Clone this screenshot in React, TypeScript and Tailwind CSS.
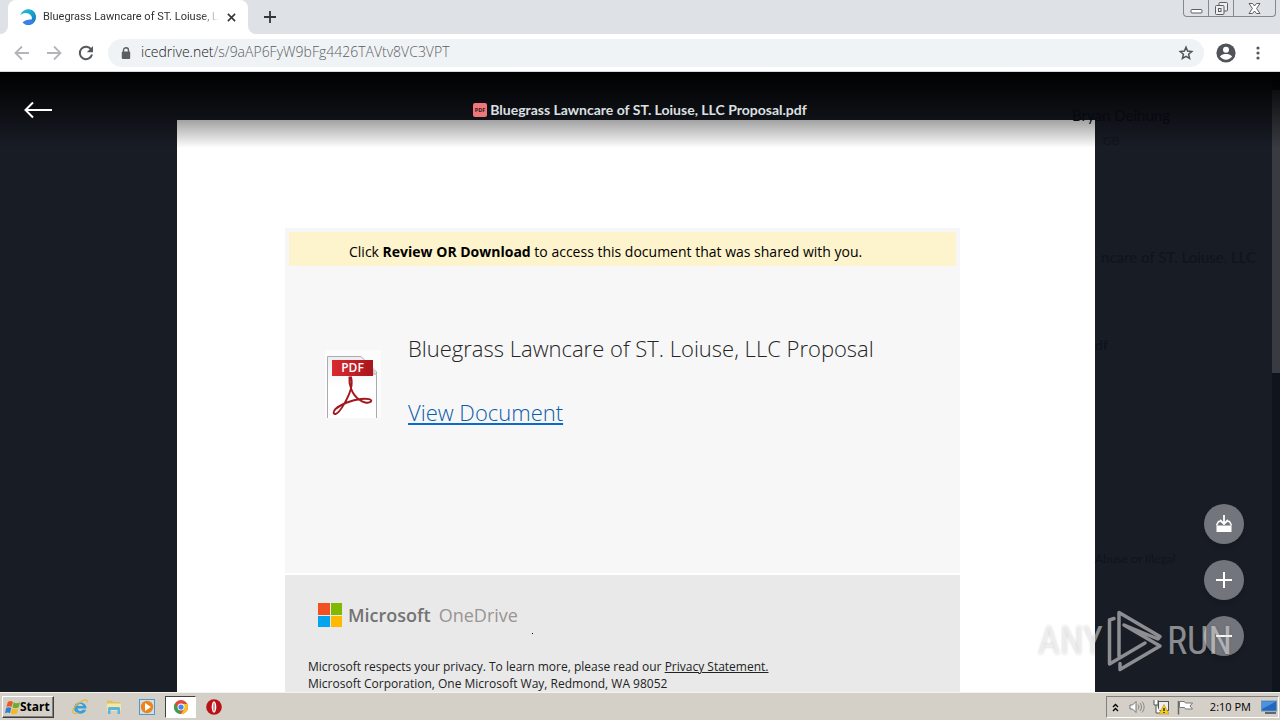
import React from "react";

const uiFont = "font-['Open_Sans','Noto_Sans',sans-serif]";

function TabStrip() {
  return (
    <div className="flex h-[34px] shrink-0 items-start bg-[#dee1e6]">
      <div className="flex h-full w-2 items-end bg-white">
        <div className="h-full w-full rounded-br-lg bg-[#dee1e6]" />
      </div>
      <div className="flex h-full w-60 items-center rounded-t-lg bg-white pr-2 pl-3">
        <svg viewBox="0 0 16 16" className="mr-[7px] size-4 shrink-0" aria-hidden="true">
          <defs>
            <linearGradient id="swirl" x1="0" y1="0" x2="1" y2="1">
              <stop offset="0" stopColor="#35b8e6" />
              <stop offset=".45" stopColor="#16a9c9" />
              <stop offset="1" stopColor="#1668c8" />
            </linearGradient>
          </defs>
          <path d="M0 6.500C1.500 2.500 4.500.2 8.400.2 12.800.2 16 3.500 16 7.900c0 4.300-3 7.600-7 8-2 .1-3.800-.5-5-1.500 3 .4 6.700-.6 7.700-3.600C12.900 7 9.500 3.900 5.700 3.900 3.300 3.900 1.300 4.900 0 6.500Z" fill="url(#swirl)" />
          <path d="M2.500 13.500c2.200-2 4-2.700 9.200-3.300l2 2.800c-3 3.600-8 3.700-11.200.5Z" fill="#3a80e6" />
        </svg>
        <span className="w-[176px] font-['Roboto',sans-serif] text-[11px] whitespace-nowrap text-[#303236] [mask-image:linear-gradient(to_right,black_90%,transparent)]">
          Bluegrass Lawncare of ST. Loiuse, LL
        </span>
        <button aria-label="Close tab" className="ml-1 flex size-4 shrink-0 items-center justify-center">
          <svg viewBox="0 0 10 10" className="size-[9px]"><path d="M1 1l8 8M9 1l-8 8" stroke="#33363a" strokeWidth="1.800" /></svg>
        </button>
      </div>
      <div className="h-full w-2 bg-white">
        <div className="h-full w-full rounded-bl-lg bg-[#dee1e6]" />
      </div>
      <button aria-label="New tab" className="flex h-full w-7 items-center justify-center">
        <svg viewBox="0 0 12 12" className="size-3"><path d="M6 0v12M0 6h12" stroke="#33363a" strokeWidth="1.800" /></svg>
      </button>
      <div className="mr-1 ml-auto flex h-[17px] rounded-b border border-t-0 border-[#85888f]">
        <button aria-label="Minimize" className="flex w-[25px] items-center justify-center border-r border-[#85888f]">
          <svg viewBox="0 0 13 13" className="size-[13px]"><rect x="1" y="7.500" width="11" height="3.500" rx="1" fill="#fff" stroke="#5c5f66" /></svg>
        </button>
        <button aria-label="Restore" className="flex w-[25px] items-center justify-center border-r border-[#85888f]">
          <svg viewBox="0 0 13 13" className="size-[13px]" fill="#eee" stroke="#5c5f66"><rect x="4" y=".5" width="8.500" height="8.500" rx="1" /><rect x=".5" y="3.500" width="8.500" height="9" rx="1" /><rect x="3.500" y="6.500" width="2.500" height="3" /></svg>
        </button>
        <button aria-label="Close window" className="flex w-[41px] items-center justify-center">
          <svg viewBox="0 0 13 11" className="h-[11px] w-[13px]"><path d="M1 .5h3.500L6.500 3l2-2.500H12L8.600 5.500 12 10.500H8.500l-2-2.500-2 2.500H1l3.400-5Z" fill="#fff" stroke="#5c5f66" /></svg>
        </button>
      </div>
    </div>
  );
}

function Toolbar() {
  return (
    <div className="flex h-[38px] shrink-0 items-center border-b border-[#d6d8db] bg-white px-[14px]">
      <button aria-label="Back" className="flex w-8 justify-start">
        <svg viewBox="0 0 16 16" className="size-4"><path d="M15 8H2M8 1.500L1.500 8 8 14.500" fill="none" stroke="#b3b5b8" strokeWidth="1.800" /></svg>
      </button>
      <button aria-label="Forward" className="flex w-8 justify-start">
        <svg viewBox="0 0 16 16" className="size-4"><path d="M1 8h13M8 1.500L14.500 8 8 14.500" fill="none" stroke="#b3b5b8" strokeWidth="1.800" /></svg>
      </button>
      <button aria-label="Reload" className="flex w-[30px] justify-start">
        <svg viewBox="0 0 16 16" className="size-4"><path d="M13.300 4.700A6.200 6.200 0 1 0 14 9.500" fill="none" stroke="#55585c" strokeWidth="2" /><path d="M15 1v6.200H8.800Z" fill="#55585c" /></svg>
      </button>
      <div className="flex h-7 flex-1 items-center rounded-full bg-[#f0f3f5] pr-[10px] pl-[13px]">
        <svg viewBox="0 0 10 12" className="mr-[10px] h-3 w-[10px] shrink-0" aria-hidden="true"><path d="M2.500 5V3.200a2.500 2.500 0 0 1 5 0V5" fill="none" stroke="#5b5e63" strokeWidth="1.400" /><rect x=".8" y="4.500" width="8.400" height="7.500" rx="1" fill="#5b5e63" /></svg>
        <div className={`${uiFont} flex-1 pb-px text-[14px] leading-5 font-light text-[#5a5d61]`}>
          <span className="text-[#202124]">icedrive.net</span>/s/9aAP6FyW9bFg4426TAVtv8VC3VPT
        </div>
        <button aria-label="Bookmark this page">
          <svg viewBox="0 0 16 16" className="size-4"><path d="M8 2.200l1.600 3.900 4.200.4-3.200 2.800 1 4.200L8 11.300l-3.600 2.200 1-4.200L2.200 6.500l4.200-.4Z" fill="none" stroke="#505358" strokeWidth="1.500" /></svg>
        </button>
      </div>
      <button aria-label="Profile" className="ml-3 flex size-5 items-center justify-center">
        <svg viewBox="0 0 20 20" className="size-5"><circle cx="10" cy="10" r="9.600" fill="#505459" /><circle cx="10" cy="6.800" r="3" fill="#fff" /><path d="M3.900 13.500c1.600-2 4-2.500 6.100-2.500s4.500.5 6.100 2.500c-1.400 2-3.700 3.200-6.100 3.200s-4.700-1.200-6.100-3.200Z" fill="#fff" /></svg>
      </button>
      <button aria-label="Menu" className="ml-[14px] flex w-4 justify-center">
        <svg viewBox="0 0 4 14" className="h-[14px] w-1" fill="#55585c"><circle cx="2" cy="2" r="1.600" /><circle cx="2" cy="7" r="1.600" /><circle cx="2" cy="12" r="1.600" /></svg>
      </button>
    </div>
  );
}

function PdfIcon() {
  return (
    <svg viewBox="0 0 56 68" className="h-[68px] w-14 shrink-0" aria-hidden="true">
      <defs>
        <linearGradient id="banner" x1="0" x2="1"><stop offset="0" stopColor="#d92b30" /><stop offset="1" stopColor="#a9151c" /></linearGradient>
        <linearGradient id="sheet" x1="0" y1="0" x2="0" y2="1"><stop offset="0" stopColor="#ededed" /><stop offset=".5" stopColor="#fff" /></linearGradient>
      </defs>
      <rect width="56" height="68" fill="#fcfcfc" />
      <path d="M2.500 68V6.500H36L51.500 22V68" fill="url(#sheet)" stroke="#a9abae" />
      <path d="M46 25h6l-5-7Z" fill="#c8c8c8" />
      <rect x="7" y="10" width="41" height="16" fill="url(#banner)" />
      <text x="27.500" y="22" textAnchor="middle" fontFamily="Open Sans" fontWeight="600" fontSize="12" fill="#fff">PDF</text>
      <path d="M24.500 26.500c-1 8 2.500 18 9.500 23 3.500 2.600 9 4.600 12 2 1.700-2.200-4-3.300-10-2.500C27 50 16 54 10.500 59 8 61.500 8 64.500 10.500 64c5-1.200 13.500-18 15.500-25.500 1-4.500.8-9-.2-12" fill="none" stroke="#a3171d" strokeWidth="1.900" />
    </svg>
  );
}

function Document() {
  return (
    <main className={`${uiFont} flex min-h-0 w-[918px] flex-col overflow-hidden bg-white px-[108px] pt-[108px]`}>
      <section className="h-[345px] w-[675px] shrink-0 bg-[#f7f7f7]">
        <div className="border-4 border-b-0 border-[#f6f6f8] bg-[#fdf3cc] px-[60px] pt-[10px] pb-1 text-[14px] leading-5 whitespace-nowrap text-black">
          Click <b>Review OR Download</b> to access this document that was shared with you.
        </div>
        <div className="flex items-start pt-[66px] pl-10">
          <div className="mt-[18px]"><PdfIcon /></div>
          <div className="ml-[27px] flex flex-col items-start gap-8 text-[22px] leading-8 font-light whitespace-nowrap">
            <h1 className="text-[#252525]">Bluegrass Lawncare of ST. Loiuse, LLC Proposal</h1>
            <a href="#document" className="text-[#0b5cab] underline decoration-[#0a6bcb] decoration-2 underline-offset-2">View Document</a>
          </div>
        </div>
      </section>
      <footer className="mt-[2px] h-[180px] w-[675px] shrink-0 bg-[#e9e9e9] pt-7 pl-[23px]">
        <div className="flex h-6 items-center pl-[10px] text-[18px] leading-6">
          <div className="grid size-6 grid-cols-2 gap-px">
            <i className="bg-[#f25022]" /><i className="bg-[#7fba00]" /><i className="bg-[#00a4ef]" /><i className="bg-[#ffb900]" />
          </div>
          <span className="ml-[6px] font-semibold text-[#737373]">Microsoft</span>
          <span className="ml-2 font-medium text-[#9a9493]">OneDrive</span>
          <span className="mt-9 ml-[14px] size-px bg-black" />
        </div>
        <div className="mt-[31px] text-[12px] leading-[17px] text-[#222]">
          <p>Microsoft respects your privacy. To learn more, please read our <a href="#privacy" className="underline">Privacy Statement.</a></p>
          <p>Microsoft Corporation, One Microsoft Way, Redmond, WA 98052</p>
        </div>
      </footer>
    </main>
  );
}

const round = "flex size-10 items-center justify-center rounded-full bg-[#72757b] shadow-md";

function Viewer() {
  return (
    <div className="relative flex min-h-0 flex-1 bg-[#181c25]">
      <div className="flex min-w-0 flex-1 justify-center pt-12"><Document /></div>
      <div className="w-2 shrink-0 bg-[#10141c] pt-[18px]"><div className="h-[283px] bg-[#383b42]" /></div>

      <div className="absolute inset-y-0 right-2 w-[177px] font-['Lato',sans-serif] whitespace-nowrap text-[#10141c]" aria-hidden="true">
        <span className="absolute top-[174px] right-4 text-[15px] font-medium">ncare of ST. Loiuse, LLC</span>
        <span className="absolute top-[262px] left-0 text-[14px] font-bold">df</span>
        <span className="absolute top-[478px] left-0 text-[12px]">Abuse or Illegal</span>
        <span className="absolute top-[60px] left-2 text-[12px]">GB</span>
      </div>

      <header className="absolute inset-x-0 top-0 flex h-[76px] items-start bg-linear-to-b from-black to-transparent pt-7 pl-6">
        <button aria-label="Back" className="w-[30px]">
          <svg viewBox="0 0 28 20" className="h-5 w-7"><path d="M28 10H2M9 2.500L1.500 10 9 17.500" fill="none" stroke="#fff" strokeWidth="2" /></svg>
        </button>
        <div className="flex min-w-0 flex-1 items-center justify-center pr-[54px] font-['Lato',sans-serif] text-[14px] leading-5 font-bold text-[#dde0e2]">
          <svg viewBox="0 0 14 14" className="mr-[3px] size-[14px]" aria-hidden="true"><rect width="14" height="14" rx="2" fill="#ef777b" /><text x="7" y="9" textAnchor="middle" fontFamily="Open Sans" fontWeight="700" fontSize="5.500" fill="#301618">PDF</text></svg>
          Bluegrass Lawncare of ST. Loiuse, LLC Proposal.pdf
        </div>
      </header>
      <span className="absolute top-8 right-[110px] font-['Lato',sans-serif] text-[15px] text-[#060a0f]" aria-hidden="true">Bryan Deihung</span>

      <div className="absolute right-9 bottom-9 flex flex-col gap-4">
        <button aria-label="Download" className={round}>
          <svg viewBox="0 0 16 18" className="h-[18px] w-4"><path d="M.5 10.500L2.500 6.500h2M11.500 6.500h2l2 4" fill="none" stroke="#fff" strokeWidth="1.500" /><path d="M.5 10.500h15v6.500H.5Z" fill="#fff" /><path d="M8 0v9M4 5L8 9l4-4" fill="none" stroke="#fff" strokeWidth="1.800" /></svg>
        </button>
        <button aria-label="Zoom in" className={round}>
          <svg viewBox="0 0 16 16" className="size-4"><path d="M8 0v16M0 8h16" stroke="#fff" strokeWidth="2" /></svg>
        </button>
        <button aria-label="Zoom out" className={round}>
          <svg viewBox="0 0 16 16" className="size-4"><path d="M0 8h16" stroke="#fff" strokeWidth="2" /></svg>
        </button>
      </div>

      <div className="pointer-events-none absolute right-[48px] bottom-5 flex items-center font-['Roboto_Condensed','Liberation_Sans_Narrow',sans-serif] text-[38px] leading-[62px] text-white/50 [text-shadow:0_0_3px_rgba(0,0,0,0.2)]">
        <span>ANY</span>
        <svg viewBox="0 0 56 62" className="mx-1 h-[62px] w-14" fill="none" stroke="#fff" strokeOpacity=".5" strokeWidth="3.500" strokeLinejoin="round" strokeLinecap="round" aria-hidden="true">
          <path d="M7 8.500L2.500 10V54L38 33M12 46V2.500L53 26.500l-2 2.500L17 15L53 36 13 59.500v-6" />
        </svg>
        <span>RUN</span>
      </div>
    </div>
  );
}

function Taskbar() {
  return (
    <div className={`${uiFont} flex h-7 shrink-0 items-center border-t border-[#f4f2ed] bg-[#d4d0c8] pt-px text-[11px] text-black`}>
      <button className="ml-[2px] flex h-[22px] w-[52px] items-center border border-t-white border-r-[#404040] border-b-[#404040] border-l-white pl-[2px] text-[12px] font-bold shadow-[inset_-1px_-1px_#808080]">
        <svg viewBox="0 0 16 16" className="size-[15px] shrink-0" aria-hidden="true"><path d="M3 2c2-1.500 4-1 5.500 0L7 7.500C5.500 6.500 3.500 6.500 1.500 7.500Z" fill="#eb5a25" /><path d="M9.200 2.500c2 1.200 4 1.300 6.800 0L14.500 8c-2.500 1-4.500 1-6.500 0Z" fill="#6dac2f" /><path d="M1.200 8.500c2-1 3.700-1 5.500 0L5.300 14C4 13 2 13 0 14Z" fill="#2f7ed0" /><path d="M7.700 9c2 1 4 1.200 6.500.2l-1.500 5.300c-2.200 1.200-4.500 1-6.500 0Z" fill="#f5b91e" /></svg>
        Start
      </button>
      <button aria-label="Internet Explorer" className="ml-[18px]">
        <svg viewBox="0 0 16 16" className="size-4"><path d="M14.500 9.500H5.500c.4 2.800 3.800 3.200 5 1.200h3.700C12.500 16.500 2 16 2 9c0-7.800 13-7.300 12.500.5ZM5.500 7H11c-.5-2.600-5-2.600-5.500 0Z" fill="#399fd9" /><path d="M15 3.500c1-3-2-3.500-6-1C3 6 0 11 1 13.500c1 2 4 .5 5 0" fill="none" stroke="#e6b638" strokeWidth="1.200" /></svg>
      </button>
      <button aria-label="File Explorer" className="ml-[18px]">
        <svg viewBox="0 0 16 16" className="size-4"><path d="M1 1.500h5l1 1.500h7.500V9H1Z" fill="#dfc165" /><rect x="1" y="4.500" width="14" height="7.500" rx="1" fill="#f5e6a4" /><path d="M2 15V9.500C2 8 3 8 4 8h8c1 0 2 0 2 1.500V15h-2.500v-4h-7v4Z" fill="#58b6df" /></svg>
      </button>
      <button aria-label="Media Player" className="ml-[17px]">
        <svg viewBox="0 0 16 16" className="size-4"><rect x=".5" y=".5" width="15" height="15" fill="#c9e1f3" stroke="#5695c7" /><circle cx="8" cy="8" r="6.200" fill="#ee8418" /><path d="M6 4L12 8 6 12Z" fill="#fff" /></svg>
      </button>
      <button aria-label="Chrome" className="ml-[10px] flex h-[22px] w-[31px] items-center justify-center border border-t-[#404040] border-r-white border-b-white border-l-[#404040] bg-white">
        <svg viewBox="0 0 16 16" className="size-[14px]"><circle cx="8" cy="8" r="8" fill="#e3493b" /><path d="M1.100 4L5 10.500 8 16A8 8 0 0 1 1.100 4Z" fill="#2da350" /><path d="M8 16a8 8 0 0 0 7-11.500H8.500L12 10Z" fill="#f6c51d" /><circle cx="8" cy="8" r="4" fill="#fff" /><circle cx="8" cy="8" r="3" fill="#4285f4" /></svg>
      </button>
      <button aria-label="Opera" className="ml-[10px]">
        <svg viewBox="0 0 16 16" className="size-4"><circle cx="8" cy="8" r="7.800" fill="#b91216" /><ellipse cx="8" cy="8" rx="2.300" ry="5.800" fill="#fff" /><ellipse cx="8" cy="8" rx=".7" ry="4.500" fill="#c9686b" /></svg>
      </button>
      <div className="mr-px ml-auto flex h-[22px] items-center border border-t-[#808080] border-r-white border-b-white border-l-[#808080] pr-px pl-[5px]">
        <button aria-label="Show hidden icons"><svg viewBox="0 0 7 9" className="h-[9px] w-[7px]"><path d="M1 4l2.500-2.500L6 4M1 8l2.500-2.500L6 8" fill="none" stroke="#000" strokeWidth="1.300" /></svg></button>
        <svg viewBox="0 0 16 14" className="ml-[10px] h-[14px] w-4" aria-hidden="true"><path d="M1 5h2.500L7 1.500v11L3.500 9H1Z" fill="#fff" stroke="#777" /><path d="M9 4.500c1.200 1.500 1.200 3.500 0 5M11 3c2 2.500 2 5.500 0 8M13 1.500c2.800 3.500 2.800 7.500 0 11" fill="none" stroke="#888" /></svg>
        <svg viewBox="0 0 16 16" className="ml-2 size-4" aria-hidden="true"><rect x="5.500" y="2.500" width="10" height="9" fill="#eee" stroke="#555" /><path d="M1 1v5h4V1M3 6v8h5" fill="#fff" stroke="#555" /><path d="M11 5.500l5 9.500H6Z" fill="#f6cf25" stroke="#b8920e" strokeWidth=".6" /><path d="M11 9v3M11 13v1" stroke="#000" strokeWidth="1.200" /></svg>
        <svg viewBox="0 0 17 15" className="ml-2 h-[15px] w-[17px]" aria-hidden="true"><path d="M1.500 1v13.500" stroke="#666" strokeWidth="1.500" /><path d="M2.500 1.500h5l1 1.500h7l-2.500 3 2.500 3h-7l-1-1.500h-5Z" fill="#fff" stroke="#777" /></svg>
        <time className="ml-4 whitespace-nowrap">2:10 PM</time>
        <svg viewBox="0 0 16 14" className="ml-[10px] h-[14px] w-4" aria-hidden="true"><rect x=".5" y="1" width="15" height="10" fill="#2368bd" stroke="#6f90b5" /><path d="M1 1.500h14L1 9Z" fill="#4d92de" /><path d="M4 13h11" stroke="#345" strokeWidth="1.500" /></svg>
      </div>
    </div>
  );
}

export default function App() {
  return (
    <div className="flex h-screen flex-col overflow-hidden">
      <TabStrip />
      <Toolbar />
      <Viewer />
      <Taskbar />
    </div>
  );
}
